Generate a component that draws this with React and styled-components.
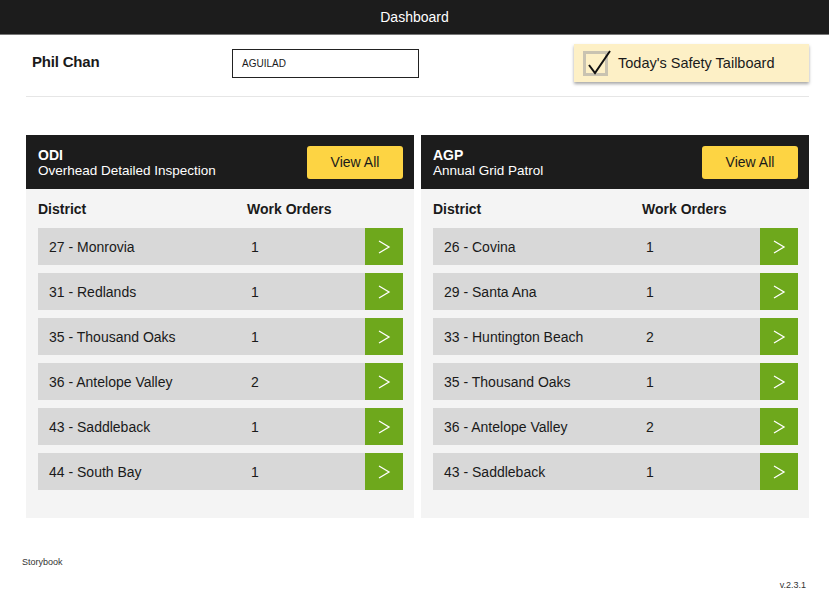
import React from "react"
import styled, { createGlobalStyle } from "styled-components"

const GlobalStyle = createGlobalStyle`
  body {
    margin: 0;
    background: #fff;
    font-family: "Liberation Sans", Arial, sans-serif;
    color: #1a1a1a;
  }
`

const Page = styled.div`
  width: 829px;
  height: 603px;
  display: flex;
  flex-direction: column;
`

const TopBar = styled.div`
  height: 35px;
  background: #1c1c1c;
  color: #fff;
  display: flex;
  align-items: center;
  justify-content: center;
  font-size: 14px;
  border-bottom: 1px solid #777;
  box-sizing: border-box;
`

const UserRow = styled.div`
  display: grid;
  grid-template-columns: 200px 187px 1fr;
  align-items: center;
  margin: 0 20px 0 26px;
  padding: 9px 0 14px 6px;
  border-bottom: 1px solid #e6e6e6;
`

const UserName = styled.div`
  font-size: 15px;
  font-weight: bold;
  letter-spacing: -0.2px;
  margin-top: -4px;
`

const UserInput = styled.div`
  height: 29px;
  border: 1px solid #222;
  box-sizing: border-box;
  display: flex;
  align-items: center;
  padding-left: 9px;
  font-size: 10px;
`

const TailboardButton = styled.div`
  justify-self: end;
  width: 235px;
  height: 38px;
  box-sizing: border-box;
  background: #fdf0c6;
  box-shadow: 0 2px 3px rgba(0, 0, 0, 0.35);
  display: flex;
  align-items: center;
  gap: 10px;
  padding-left: 9px;
  font-size: 14.5px;
`

const CheckBox = styled.div`
  position: relative;
  width: 25px;
  height: 25px;
  box-sizing: border-box;
  border: 3px solid #c9c3b1;
  svg {
    position: absolute;
    left: 0;
    top: -7px;
  }
`

const Cards = styled.div`
  display: grid;
  grid-template-columns: 388px 388px;
  gap: 7px;
  margin: 38px 0 0 26px;
`

const Card = styled.div`
  background: #f4f4f4;
  height: 383px;
`

const CardHead = styled.div`
  height: 54px;
  background: #1c1c1c;
  color: #fff;
  display: flex;
  align-items: center;
  justify-content: space-between;
  padding: 0 11px 0 12px;
`

const CardTitle = styled.div`
  font-size: 14px;
  font-weight: bold;
  line-height: 16px;
  margin-top: 2px;
  span {
    display: block;
    font-weight: normal;
    font-size: 13.5px;
  }
`

const ViewAll = styled.div`
  width: 96px;
  height: 33px;
  background: #fdd443;
  color: #1a1a1a;
  border-radius: 3px;
  display: flex;
  align-items: center;
  justify-content: center;
  font-size: 14px;
`

const CardBody = styled.div`
  padding: 0 11px 0 12px;
`

const ColumnHeads = styled.div`
  display: grid;
  grid-template-columns: 209px 1fr;
  height: 39px;
  align-items: center;
  font-size: 14px;
  font-weight: bold;
`

const Rows = styled.div`
  display: flex;
  flex-direction: column;
  gap: 8px;
`

const Row = styled.div`
  height: 37px;
  background: #d8d8d8;
  display: grid;
  grid-template-columns: 202px 1fr 38px;
  align-items: center;
  font-size: 14px;
  padding-left: 11px;
`

const Go = styled.div`
  height: 37px;
  background: #6ea81c;
  display: flex;
  align-items: center;
  justify-content: center;
`

const Footer = styled.div`
  font-size: 9px;
  color: #333;
  padding: 39px 23px 0 22px;
  display: flex;
  flex-direction: column;
`

const Version = styled.div`
  align-self: flex-end;
  margin-top: 13px;
`

const cards = [
  {
    code: "ODI",
    name: "Overhead Detailed Inspection",
    rows: [
      ["27 - Monrovia", 1],
      ["31 - Redlands", 1],
      ["35 - Thousand Oaks", 1],
      ["36 - Antelope Valley", 2],
      ["43 - Saddleback", 1],
      ["44 - South Bay", 1],
    ],
  },
  {
    code: "AGP",
    name: "Annual Grid Patrol",
    rows: [
      ["26 - Covina", 1],
      ["29 - Santa Ana", 1],
      ["33 - Huntington Beach", 2],
      ["35 - Thousand Oaks", 1],
      ["36 - Antelope Valley", 2],
      ["43 - Saddleback", 1],
    ],
  },
]

function Arrow() {
  return (
    <svg width="14" height="16" viewBox="0 0 14 16">
      <path d="M2 2 L12 8 L2 14" fill="none" stroke="#fff" strokeWidth="1.3" />
    </svg>
  )
}

export default function App() {
  return (
    <Page>
      <GlobalStyle />
      <TopBar>Dashboard</TopBar>
      <UserRow>
        <UserName>Phil Chan</UserName>
        <UserInput>AGUILAD</UserInput>
        <TailboardButton>
          <CheckBox>
            <svg width="30" height="30" viewBox="0 0 30 30">
              <path d="M3 18 L9 26 L24 4" fill="none" stroke="#111" strokeWidth="2" />
            </svg>
          </CheckBox>
          Today's Safety Tailboard
        </TailboardButton>
      </UserRow>
      <Cards>
        {cards.map((c) => (
          <Card key={c.code}>
            <CardHead>
              <CardTitle>
                {c.code}
                <span>{c.name}</span>
              </CardTitle>
              <ViewAll>View All</ViewAll>
            </CardHead>
            <CardBody>
              <ColumnHeads>
                <div>District</div>
                <div>Work Orders</div>
              </ColumnHeads>
              <Rows>
                {c.rows.map(([d, n]) => (
                  <Row key={d}>
                    <div>{d}</div>
                    <div>{n}</div>
                    <Go>
                      <Arrow />
                    </Go>
                  </Row>
                ))}
              </Rows>
            </CardBody>
          </Card>
        ))}
      </Cards>
      <Footer>
        <div>Storybook</div>
        <Version>v.2.3.1</Version>
      </Footer>
    </Page>
  )
}
